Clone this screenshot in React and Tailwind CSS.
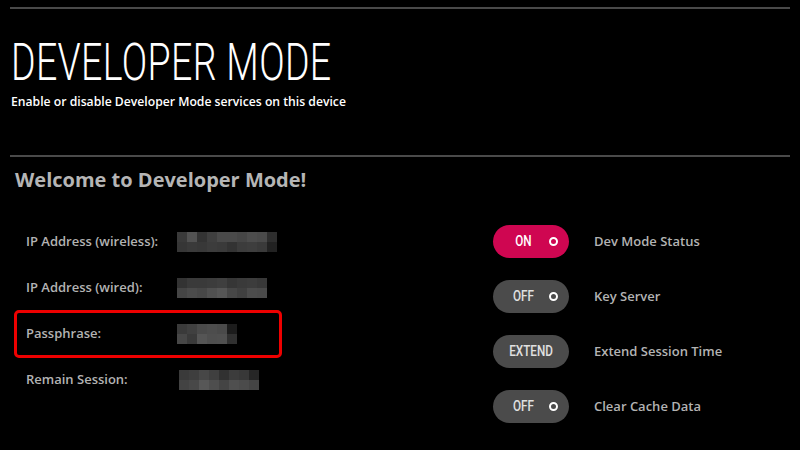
import React from "react";

const mosaics = {
  wireless: [
    ["#3a3a3a", "#525252", "#333333", "#3f3f3f", "#4a4a4a", "#4a4a4a", "#464646", "#4d4d4d", "#4a4a4a", "#2e2e2e"],
    ["#363636", "#3a3a3a", "#383838", "#3c3c3c", "#3a3a3a", "#333333", "#3c3c3c", "#3e3e3e", "#3a3a3a", "#222222"],
  ],
  wired: [
    ["#333333", "#3a3a3a", "#3a3a3a", "#3c3c3c", "#3f3f3f", "#363636", "#3a3a3a", "#3c3c3c", "#383838"],
    ["#454545", "#4b4b4b", "#474747", "#505050", "#565656", "#474747", "#404040", "#4c4c4c", "#4a4a4a"],
  ],
  pass: [
    ["#3a3a3a", "#404040", "#4a4a4a", "#4d4d4d", "#4a4a4a", "#1c1c1c"],
    ["#474747", "#3a3a3a", "#555555", "#4f4f4f", "#505050", "#303030"],
  ],
  remain: [
    ["#3a3a3a", "#3e3e3e", "#474747", "#3f3f3f", "#313131", "#3c3c3c", "#383838", "#262626"],
    ["#434343", "#484848", "#575757", "#4e4e4e", "#444444", "#4f4f4f", "#4b4b4b", "#444444"],
  ],
};

function Mosaic({ data, className = "" }) {
  return (
    <div className={"flex flex-col " + className}>
      {data.map((row, i) => (
        <div key={i} className="flex">
          {row.map((c, j) => (
            <div key={j} className="w-[10px] h-[10px]" style={{ backgroundColor: c }} />
          ))}
        </div>
      ))}
    </div>
  );
}

const labelFont = { fontFamily: "'Open Sans', 'Liberation Sans', sans-serif" };
const condFont = { fontFamily: "Roboto, 'Liberation Sans', sans-serif" };

function Toggle({ text, on, circle = true }) {
  return (
    <div
      className={
        "w-[76px] h-[33px] rounded-full flex items-center " +
        (on ? "bg-[#cf0651]" : "bg-[#4b4b4b]")
      }
    >
      {circle ? (
        <>
          <div className="w-[41px] ml-[10px] flex justify-center">
            <span
              className={
                "inline-block text-[15px] font-medium scale-x-[0.78] leading-none " +
                (on ? "text-white" : "text-[#e0e0e0]")
              }
              style={condFont}
            >
              {text}
            </span>
          </div>
          <div className="ml-auto mr-[11px] w-[9px] h-[9px] rounded-full border-2 border-white" />
        </>
      ) : (
        <div className="w-full flex justify-center">
          <span
            className="inline-block text-[15px] font-medium text-[#e0e0e0] scale-x-[0.78] leading-none"
            style={condFont}
          >
            {text}
          </span>
        </div>
      )}
    </div>
  );
}

function LeftRow({ label, data, offset = "ml-0" }) {
  return (
    <div className="h-[46px] flex items-center pl-[12px]">
      <div className="w-[151px] text-[13px] font-semibold text-[#b3b3b3]" style={labelFont}>
        {label}
      </div>
      <Mosaic data={data} className={offset} />
    </div>
  );
}

function RightRow({ children, label }) {
  return (
    <div className="h-[55px] flex items-center">
      {children}
      <div className="ml-[25px] text-[13px] font-semibold text-[#b3b3b3]" style={labelFont}>
        {label}
      </div>
    </div>
  );
}

export default function App() {
  return (
    <div className="w-[800px] h-[450px] bg-black overflow-hidden px-[10px] pt-[7px]">
      <div className="h-[2px] bg-[#4a4a4a]" />
      <div className="pl-[1px] mt-[22px] h-[62px] flex items-center">
        <span
          className="inline-block origin-left scale-x-[0.735] text-[51px] font-light text-white leading-none tracking-[0.5px]"
          style={condFont}
        >
          DEVELOPER MODE
        </span>
      </div>
      <div className="pl-[1px] mt-[1px] text-[12.2px] font-semibold text-white leading-[16px]" style={labelFont}>
        Enable or disable Developer Mode services on this device
      </div>
      <div className="mt-[45px] h-[2px] bg-[#4a4a4a]" />
      <div className="pl-[5px] mt-[10px] text-[20px] font-bold text-[#b5b5b5] leading-[26px]" style={labelFont}>
        Welcome to Developer Mode!
      </div>
      <div className="flex mt-[20px]">
        <div className="w-[483px] pl-[4px] pt-[6px]">
          <LeftRow label="IP Address (wireless):" data={mosaics.wireless} />
          <LeftRow label="IP Address (wired):" data={mosaics.wired} />
          <div className="w-[268px] h-[48px] -my-[1px] border-[3px] border-[#ee0000] rounded-[5px] flex items-center pl-[9px]">
            <div className="w-[151px] text-[13px] font-semibold text-[#b3b3b3]" style={labelFont}>
              Passphrase:
            </div>
            <Mosaic data={mosaics.pass} />
          </div>
          <LeftRow label="Remain Session:" data={mosaics.remain} offset="ml-[2px]" />
        </div>
        <div className="flex flex-col pt-[1px]">
          <RightRow label="Dev Mode Status">
            <Toggle text="ON" on />
          </RightRow>
          <RightRow label="Key Server">
            <Toggle text="OFF" />
          </RightRow>
          <RightRow label="Extend Session Time">
            <Toggle text="EXTEND" circle={false} />
          </RightRow>
          <RightRow label="Clear Cache Data">
            <Toggle text="OFF" />
          </RightRow>
        </div>
      </div>
    </div>
  );
}
